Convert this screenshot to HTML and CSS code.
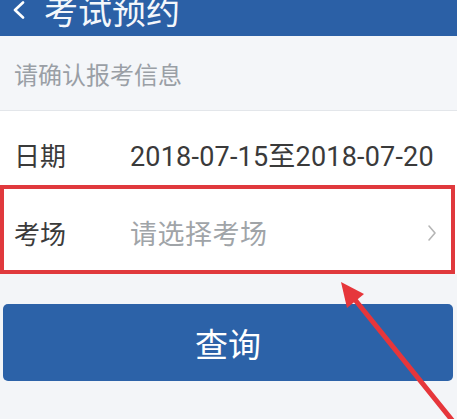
FILE: index.html
```html
<!DOCTYPE html>
<html lang="zh-CN">
<head>
<meta charset="utf-8">
<title>考试预约</title>
<link rel="stylesheet" href="styles.css">
</head>
<body>
<div class="page">
  <header class="topbar">
    <svg class="back" width="14" height="18" viewBox="0 0 14 18"><path d="M11 1.5 L3 9 L11 16.5" fill="none" stroke="#fff" stroke-width="2.6" stroke-linecap="round" stroke-linejoin="round"/></svg>
    <h1 class="title">考试预约</h1>
  </header>
  <div class="notice">请确认报考信息</div>
  <div class="form">
    <div class="row row-date">
      <span class="label">日期</span>
      <span class="value">2018-07-15至2018-07-20</span>
    </div>
    <div class="row row-site">
      <span class="label">考场</span>
      <span class="value placeholder">请选择考场</span>
      <svg class="chev" width="10" height="18" viewBox="0 0 10 18"><path d="M2 2 L8 9 L2 16" fill="none" stroke="#b5b5b5" stroke-width="1.6" stroke-linecap="round" stroke-linejoin="round"/></svg>
    </div>
  </div>
  <div class="actions">
    <button class="btn">查询</button>
  </div>
  <svg class="arrow" width="457" height="419" viewBox="0 0 457 419">
    <line x1="456" y1="425" x2="352" y2="296" stroke="#e6363b" stroke-width="5" stroke-linecap="round"/>
    <polygon points="341,282 364,294 347,308" fill="#e6363b"/>
  </svg>
</div>
</body>
</html>
```
FILE: styles.css
```css
* { box-sizing: border-box; }
html, body { margin: 0; padding: 0; }
body {
  width: 457px;
  height: 419px;
  overflow: hidden;
  background: #f3f5f8;
  font-family: "Noto Sans CJK SC", "Noto Sans", sans-serif;
}
.page {
  position: relative;
  width: 457px;
  height: 419px;
}
.topbar {
  height: 36px;
  background: #2b60a6;
  display: flex;
  align-items: flex-start;
  padding-left: 12px;
  overflow: hidden;
}
.back {
  margin-top: 1px;
  flex: none;
}
.title {
  margin: -10px 0 0 18px;
  font-size: 34px;
  line-height: 40px;
  font-weight: 400;
  color: #f4f7fb;
}
.notice {
  height: 75px;
  padding: 0 0 0 14px;
  display: flex;
  align-items: center;
  font-size: 24px;
  color: #9a9fa6;
  border-bottom: 1px solid #e3e6ea;
  background: #f4f6f9;
}
.form {
  background: #fff;
}
.row {
  display: flex;
  align-items: center;
  font-size: 26px;
  color: #3a3a3a;
}
.row-date {
  height: 74px;
  padding: 12px 0 0 14px;
}
.row-site {
  height: 89px;
  width: 455px;
  border: 4px solid #e0393d;
  padding: 6px 14px 0 10px;
}
.label {
  width: 116px;
  flex: none;
}
.value {
  font-family: "Roboto", "Noto Sans CJK SC", sans-serif;
  font-size: 27px;
  color: #3a3a3a;
  letter-spacing: 0.2px;
}
.placeholder {
  font-family: "Noto Sans CJK SC", sans-serif;
  color: #a0a4a8;
  flex: 1;
  letter-spacing: 0.5px;
}
.chev { flex: none; }
.actions {
  padding: 30px 4px 0 3px;
}
.btn {
  display: flex;
  align-items: center;
  justify-content: center;
  width: 100%;
  height: 77px;
  border: none;
  border-radius: 5px;
  background: #2c62a8;
  color: #fff;
  font-family: "Noto Sans CJK SC", sans-serif;
  font-size: 33px;
  padding: 0;
}
.arrow {
  position: absolute;
  left: 0;
  top: 0;
  pointer-events: none;
}
```
